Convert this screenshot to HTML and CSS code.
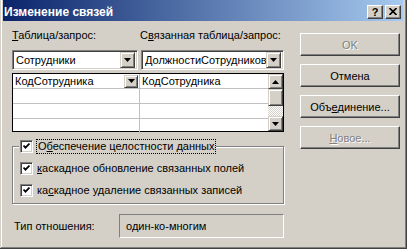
FILE: index.html
```html
<!DOCTYPE html>
<html lang="ru">

<head>
  <meta charset="UTF-8">
  <title>Изменение связей</title>
  <link rel="stylesheet" href="styles.css">
</head>

<body>
  <div class="window">
    <div class="titlebar">
      <span class="title">Изменение связей</span>
      <span class="caption-btn help">?</span>
      <span class="caption-btn close">
        <svg width="8" height="7" viewBox="0 0 8 7"><path d="M0.5 0 L7.5 7 M7.5 0 L0.5 7" stroke="#000" stroke-width="1.6"/></svg>
      </span>
    </div>
    <div class="dialog">
      <div class="left">
        <div class="labels">
          <span class="lbl lbl-table"><u>Т</u>аблица/запрос:</span>
          <span class="lbl">С<u>в</u>язанная таблица/запрос:</span>
        </div>
        <div class="combos">
          <div class="combo combo-table">
            <span class="combo-text">Сотрудники</span>
            <span class="drop"><svg width="7" height="4" viewBox="0 0 7 4"><path d="M0 0 H7 L3.5 4 Z"/></svg></span>
          </div>
          <div class="combo combo-related">
            <span class="combo-text">ДолжностиСотрудников</span>
            <span class="drop"><svg width="7" height="4" viewBox="0 0 7 4"><path d="M0 0 H7 L3.5 4 Z"/></svg></span>
          </div>
        </div>
        <div class="grid">
          <div class="rows">
            <div class="row">
              <div class="cell cell-left">
                <span class="cell-text">КодСотрудника</span>
                <span class="drop mini"><svg width="7" height="4" viewBox="0 0 7 4"><path d="M0 0 H7 L3.5 4 Z"/></svg></span>
              </div>
              <div class="cell"><span class="cell-text">КодСотрудника</span></div>
            </div>
            <div class="row"><div class="cell cell-left"></div><div class="cell"></div></div>
            <div class="row"><div class="cell cell-left"></div><div class="cell"></div></div>
            <div class="row"><div class="cell cell-left"></div><div class="cell"></div></div>
          </div>
          <div class="scrollbar">
            <span class="sb-btn"><svg width="7" height="4" viewBox="0 0 7 4"><path d="M0 4 H7 L3.5 0 Z"/></svg></span>
            <span class="sb-thumb"></span>
            <span class="sb-track"></span>
            <span class="sb-btn"><svg width="7" height="4" viewBox="0 0 7 4"><path d="M0 0 H7 L3.5 4 Z"/></svg></span>
          </div>
        </div>
        <fieldset class="group">
          <legend class="check">
            <span class="box"><svg width="7" height="7" viewBox="0 0 7 7"><path d="M0.5 2.5 L2.5 4.6 L6.5 0.6" fill="none" stroke="#000" stroke-width="1.8"/></svg></span>
            <span class="focus">О<u>б</u>еспечение целостности данных</span>
          </legend>
          <div class="check">
            <span class="box"><svg width="7" height="7" viewBox="0 0 7 7"><path d="M0.5 2.5 L2.5 4.6 L6.5 0.6" fill="none" stroke="#000" stroke-width="1.8"/></svg></span>
            <span><u>к</u>аскадное обновление связанных полей</span>
          </div>
          <div class="check">
            <span class="box"><svg width="7" height="7" viewBox="0 0 7 7"><path d="M0.5 2.5 L2.5 4.6 L6.5 0.6" fill="none" stroke="#000" stroke-width="1.8"/></svg></span>
            <span>ка<u>с</u>кадное удаление связанных записей</span>
          </div>
        </fieldset>
        <div class="relation">
          <span class="relation-label">Тип отношения:</span>
          <span class="relation-value">один-ко-многим</span>
        </div>
      </div>
      <div class="buttons">
        <button class="btn" type="button" disabled>OK</button>
        <button class="btn" type="button">Отмена</button>
        <button class="btn" type="button">Объ<u>е</u>динение...</button>
        <button class="btn" type="button" disabled><u>Н</u>овое...</button>
      </div>
    </div>
  </div>
</body>

</html>
```

FILE: styles.css
```css
/* classic grey: face #D4D0C8, shadow #808080, dark #404040 */
* {
  box-sizing: border-box;
}

body {
  margin: 0;
  font-family: "Liberation Sans", Arial, sans-serif;
  font-size: 11px;
  color: #000;
}

.window {
  width: 407px;
  height: 249px;
  background: #D4D0C8;
  padding: 0 4px 4px 3px;
  box-shadow: inset -1px -1px #404040, inset 1px 0 #D4D0C8, inset -2px -2px #808080, inset 2px 0 #fff;
}

.titlebar {
  height: 21px;
  display: flex;
  align-items: center;
  gap: 2px;
  padding: 2px 2px 0 1px;
  background: linear-gradient(to right, #0A246A, #A6CAF0);
}

.title {
  flex-grow: 1;
  color: #fff;
  font-weight: bold;
  font-size: 12px;
}

.caption-btn {
  width: 16px;
  height: 14px;
  display: flex;
  align-items: center;
  justify-content: center;
  background: #D4D0C8;
  font-weight: bold;
  font-size: 11px;
  border: 1px solid;
  border-color: #fff #404040 #404040 #fff;
  box-shadow: inset -1px -1px #808080;
}

.dialog {
  display: flex;
  gap: 16px;
  padding: 8px 0 0 9px;
}

.left {
  width: 272px;
}

.labels {
  display: flex;
  height: 13px;
  line-height: 13px;
}

.lbl-table {
  width: 128px;
}

.combos {
  display: flex;
  gap: 3px;
  margin-top: 8px;
}

.combo {
  height: 20px;
  display: flex;
  align-items: center;
  background: #fff;
  border: 1px solid;
  border-color: #808080 #fff #fff #808080;
  box-shadow: inset 1px 1px #404040, inset -1px -1px #D4D0C8;
  padding: 2px 2px 2px 3px;
  overflow: hidden;
}

.combo-table {
  width: 126px;
}

.combo-related {
  width: 143px;
}

.combo-text {
  flex-grow: 1;
  white-space: nowrap;
  overflow: hidden;
}

.drop {
  flex: none;
  width: 15px;
  height: 16px;
  display: flex;
  align-items: center;
  justify-content: center;
  background: #D4D0C8;
  border: 1px solid;
  border-color: #D4D0C8 #404040 #404040 #D4D0C8;
  box-shadow: inset 1px 1px #fff, inset -1px -1px #808080;
}

.drop.mini {
  width: 14px;
  height: 13px;
}

.grid {
  display: flex;
  height: 59px;
  margin-top: 3px;
  border: 1px solid #000;
  background: #fff;
}

.rows {
  flex-grow: 1;
}

.row {
  display: flex;
  height: 15px;
  border-bottom: 1px solid #C0C0C0;
}

.row:last-child {
  border-bottom: none;
}

.cell {
  flex-grow: 1;
  display: flex;
  align-items: center;
  padding-left: 2px;
}

.cell-left {
  flex: none;
  width: 127px;
  border-right: 1px solid #C0C0C0;
  padding-right: 1px;
}

.cell-text {
  flex-grow: 1;
}

.scrollbar {
  width: 15px;
  display: flex;
  flex-direction: column;
}

.sb-btn,
.sb-thumb {
  flex: none;
  display: flex;
  align-items: center;
  justify-content: center;
  height: 15px;
  background: #D4D0C8;
  border: 1px solid;
  border-color: #D4D0C8 #404040 #404040 #D4D0C8;
  box-shadow: inset 1px 1px #fff, inset -1px -1px #808080;
}

.sb-thumb {
  height: 17px;
}

.sb-track {
  flex-grow: 1;
  background: repeating-conic-gradient(#fff 0 25%, #D4D0C8 0 50%) 0 0 / 2px 2px;
}

.group {
  margin: 7px 0 0;
  padding: 0 0 4px 7px;
  height: 65px;
  border: 1px solid #808080;
  box-shadow: inset 1px 1px #fff, 1px 1px #fff;
}

.group legend {
  padding: 0 1px;
  margin-left: -1px;
  background: #D4D0C8;
}

.check {
  display: flex;
  align-items: center;
  gap: 4px;
  height: 14px;
}

.group div.check {
  margin-top: 8px;
}

.box {
  flex: none;
  width: 13px;
  height: 13px;
  display: flex;
  align-items: center;
  justify-content: center;
  background: #fff;
  border: 1px solid;
  border-color: #808080 #fff #fff #808080;
  box-shadow: inset 1px 1px #404040, inset -1px -1px #D4D0C8;
}

.focus {
  outline: 1px dotted #000;
  padding: 0 1px;
  line-height: 13px;
}

.relation {
  display: flex;
  align-items: center;
  margin-top: 10px;
}

.relation-label {
  width: 107px;
  padding-left: 2px;
}

.relation-value {
  flex-grow: 1;
  height: 24px;
  display: flex;
  align-items: center;
  padding-left: 6px;
  border: 1px solid;
  border-color: #808080 #fff #fff #808080;
}

.buttons {
  display: flex;
  flex-direction: column;
  gap: 8px;
  padding-top: 4px;
}

.btn {
  width: 100px;
  height: 23px;
  font: inherit;
  color: #000;
  background: #D4D0C8;
  border: 1px solid;
  border-color: #fff #404040 #404040 #fff;
  box-shadow: inset -1px -1px #808080;
  padding: 0;
}

.btn:disabled {
  color: #808080;
  text-shadow: 1px 1px #fff;
}
```
